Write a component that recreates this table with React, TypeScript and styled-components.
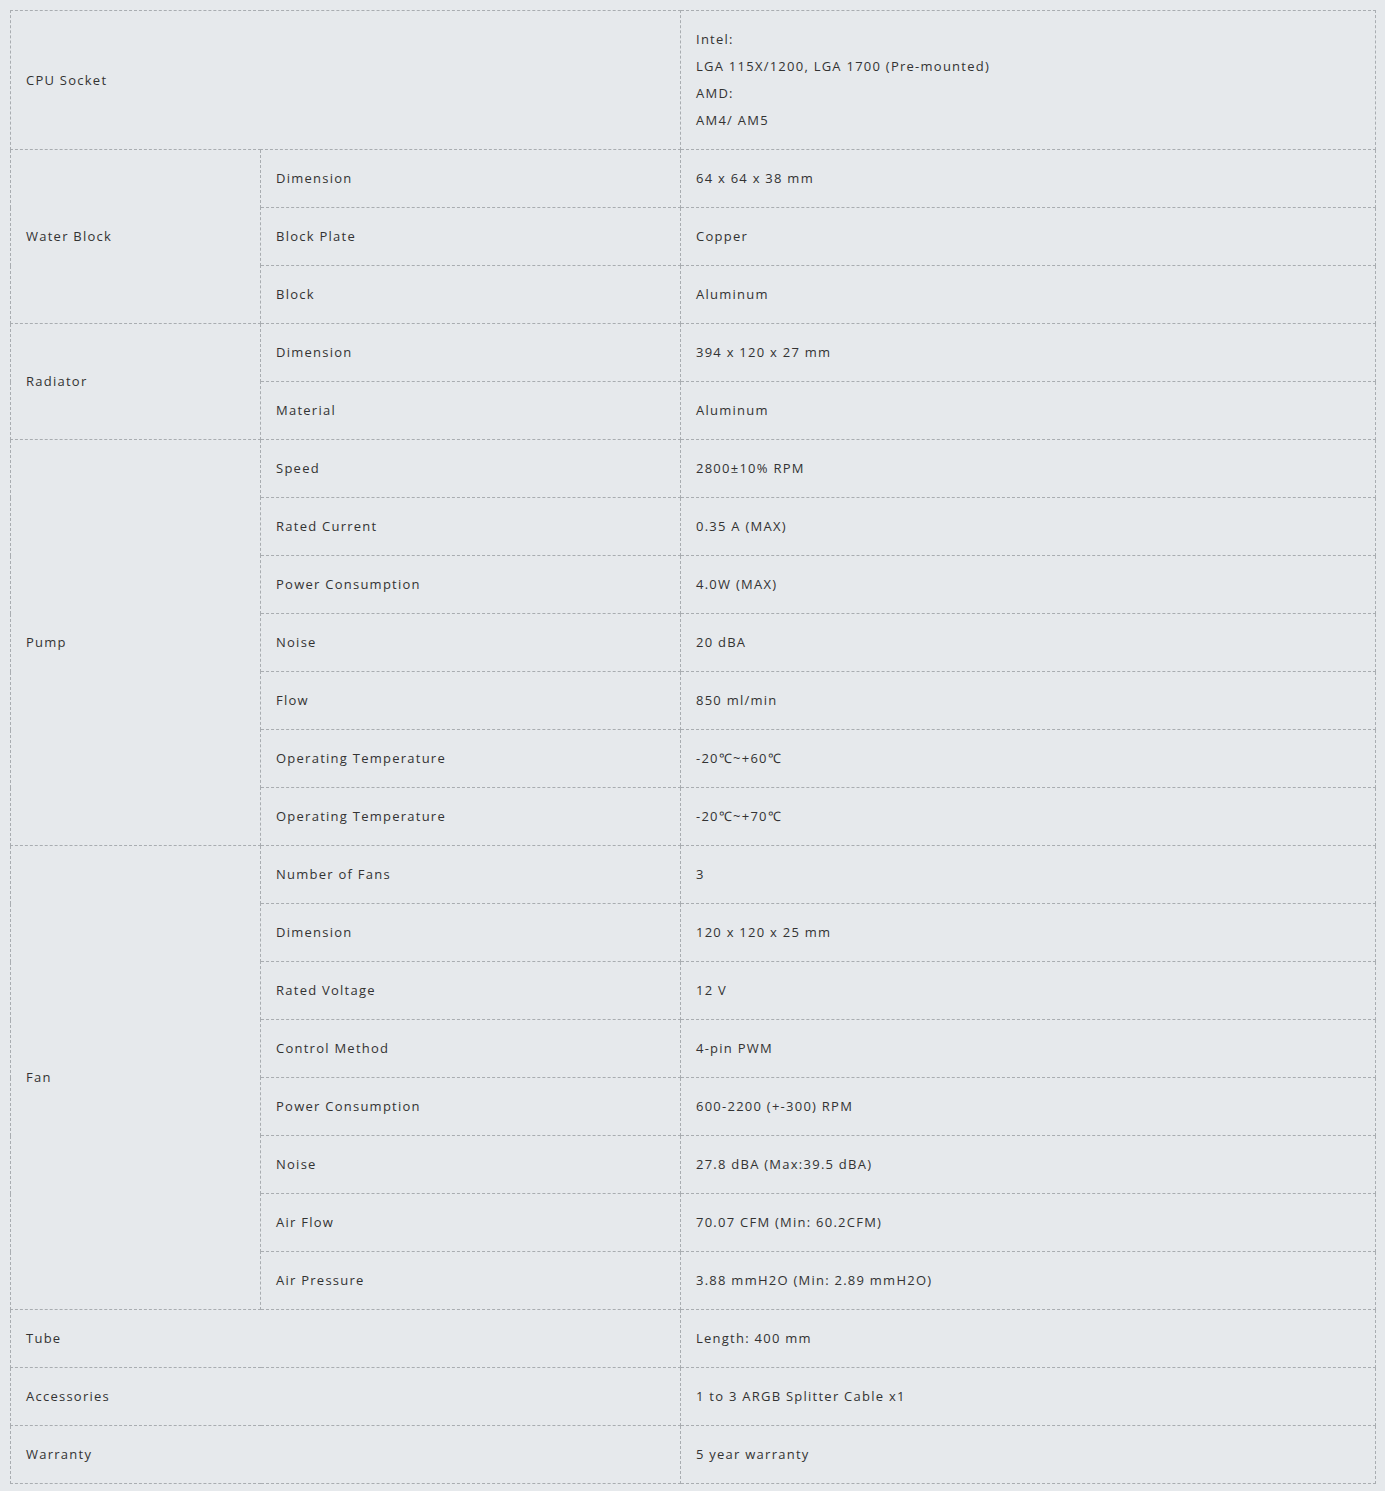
import React from "react";
import styled, { createGlobalStyle } from "styled-components";

const GlobalStyle = createGlobalStyle`
  html, body {
    margin: 0;
    padding: 0;
    background: #e6e9ec;
  }
`;

const Page = styled.div`
  padding: 10px 10px 8px 10px;
  background: #e6e9ec;
  font-family: "Open Sans", "Liberation Sans", sans-serif;
`;

const Table = styled.table`
  width: 1365px;
  border-collapse: collapse;
  table-layout: fixed;
  color: #333;
  font-size: 13px;
  letter-spacing: 1.25px;
`;

const Cell = styled.td<{ $tall?: boolean }>`
  border: 1px dashed #a9adb1;
  padding: 0 15px;
  height: ${(p) => (p.$tall ? "139px" : "58px")};
  box-sizing: border-box;
  vertical-align: middle;
  line-height: 27px;
`;

type Spec = { name: string; value: string };
type Group = { title: string; items: Spec[] };

const groups: Group[] = [
  {
    title: "Water Block",
    items: [
      { name: "Dimension", value: "64 x 64 x 38 mm" },
      { name: "Block Plate", value: "Copper" },
      { name: "Block", value: "Aluminum" },
    ],
  },
  {
    title: "Radiator",
    items: [
      { name: "Dimension", value: "394 x 120 x 27 mm" },
      { name: "Material", value: "Aluminum" },
    ],
  },
  {
    title: "Pump",
    items: [
      { name: "Speed", value: "2800±10% RPM" },
      { name: "Rated Current", value: "0.35 A (MAX)" },
      { name: "Power Consumption", value: "4.0W (MAX)" },
      { name: "Noise", value: "20 dBA" },
      { name: "Flow", value: "850 ml/min" },
      { name: "Operating Temperature", value: "-20℃~+60℃" },
      { name: "Operating Temperature", value: "-20℃~+70℃" },
    ],
  },
  {
    title: "Fan",
    items: [
      { name: "Number of Fans", value: "3" },
      { name: "Dimension", value: "120 x 120 x 25 mm" },
      { name: "Rated Voltage", value: "12 V" },
      { name: "Control Method", value: "4-pin PWM" },
      { name: "Power Consumption", value: "600-2200 (+-300) RPM" },
      { name: "Noise", value: "27.8 dBA (Max:39.5 dBA)" },
      { name: "Air Flow", value: "70.07 CFM (Min: 60.2CFM)" },
      { name: "Air Pressure", value: "3.88 mmH2O (Min: 2.89 mmH2O)" },
    ],
  },
];

const singles: Spec[] = [
  { name: "Tube", value: "Length: 400 mm" },
  { name: "Accessories", value: "1 to 3 ARGB Splitter Cable x1" },
  { name: "Warranty", value: "5 year warranty" },
];

export default function App() {
  return (
    <>
      <GlobalStyle />
      <Page>
        <Table>
          <colgroup>
            <col style={{ width: 250 }} />
            <col style={{ width: 420 }} />
            <col style={{ width: 695 }} />
          </colgroup>
          <tbody>
            <tr>
              <Cell $tall colSpan={2}>CPU Socket</Cell>
              <Cell $tall>
                Intel:
                <br />
                LGA 115X/1200, LGA 1700 (Pre-mounted)
                <br />
                AMD:
                <br />
                AM4/ AM5
              </Cell>
            </tr>
            {groups.map((g) =>
              g.items.map((it, i) => (
                <tr key={g.title + i}>
                  {i === 0 && <Cell rowSpan={g.items.length}>{g.title}</Cell>}
                  <Cell>{it.name}</Cell>
                  <Cell>{it.value}</Cell>
                </tr>
              ))
            )}
            {singles.map((s) => (
              <tr key={s.name}>
                <Cell colSpan={2}>{s.name}</Cell>
                <Cell>{s.value}</Cell>
              </tr>
            ))}
          </tbody>
        </Table>
      </Page>
    </>
  );
}
